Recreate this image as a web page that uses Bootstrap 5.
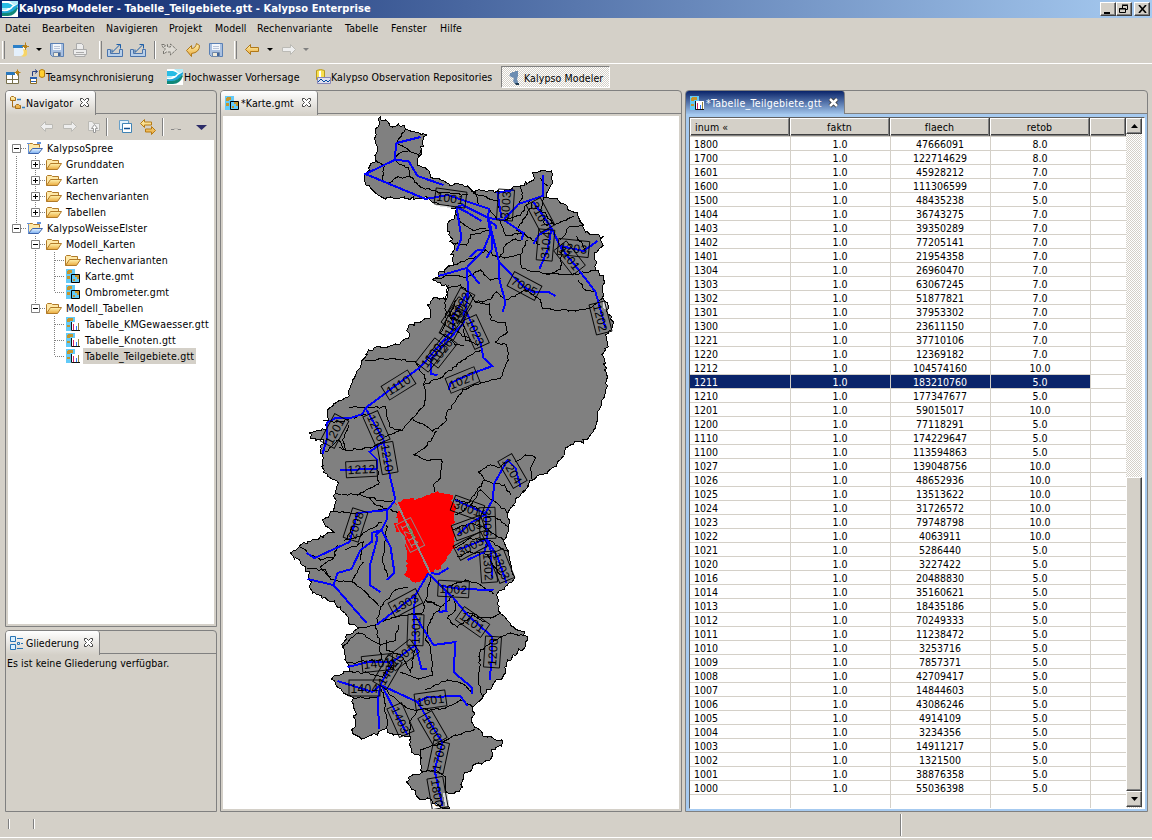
<!DOCTYPE html>
<html lang="de">
<head>
<meta charset="utf-8">
<title>Kalypso Modeler</title>
<link rel="stylesheet" href="https://cdn.jsdelivr.net/npm/bootstrap@5.3.0/dist/css/bootstrap.min.css">
<style>
:root{--face:#d4d0c8;--line:#808080}
html,body{height:840px;overflow:hidden}
body{width:1152px;background:var(--face);color:#000;font:10.5px/14px "DejaVu Sans Condensed","DejaVu Sans",sans-serif;font-stretch:condensed;letter-spacing:.1px;white-space:nowrap}
svg{display:block;flex:none}
.titlebar{height:18px;padding:0 2px 0 2px;background:linear-gradient(90deg,#0a246a,#a6caf0);color:#fff;font-weight:700;font-size:11px}
.titlebar .caption{letter-spacing:.09px;margin-left:1px}
.winbtn{width:16px;height:14px;background:var(--face);border:1px solid;border-color:#fff #404040 #404040 #fff;box-shadow:inset -1px -1px #808080;display:flex;align-items:center;justify-content:center}
.menus{height:20px;display:grid;grid-template-columns:37px 64px 63px 46px 42px 88px 46px 49px 40px;padding-left:5px;align-items:center}
.tools{height:24px;padding-bottom:1px;display:grid;grid-template-columns:13px 23px 13px 23px 27px 8px 23px 24px 7px 24px 23px 26px 10px 23px 14px 22px 20px;align-items:center}
.grip{width:3px;height:18px;border-left:1px solid #fff;border-right:1px solid #808080}
.grip.first{margin-left:2px}
.sep{width:2px;height:18px;border-left:1px solid #808080;border-right:1px solid #fff}
.caret{width:0;height:0;border:3px solid transparent;border-top-color:#000;border-bottom:0}
.caret.off{border-top-color:#808080}
.persp{height:27px;border-top:1px solid #fff;display:grid;grid-template-columns:24px 17px 121px 17px 131px 16px 170px 109px;padding:0 0 0 5px;align-items:center;margin-top:1px}
.persp>svg,.persp>span{margin-top:-1px}
.pressed{height:22px;border:1px solid;border-color:#808080 #fff #fff #808080;background:repeating-conic-gradient(#fff 0 25%,#d4d0c8 0 50%) 0 0/2px 2px;padding:2px 0 0 6px}
.work{height:722px;display:grid;grid-template-columns:212px 462px 463px;column-gap:3px;padding-left:5px}
.left{display:grid;grid-template-rows:537px 182px;row-gap:3px}
.pane{border:1px solid var(--line);border-radius:4px 4px 0 0;display:flex;flex-direction:column;min-width:0;min-height:0}
.tabs{height:23px;display:flex;flex:none}
.tabs::after{content:"";flex:1;border-bottom:1px solid var(--line)}
.tab{height:24px;border-right:1px solid var(--line);background:linear-gradient(#fff,#d4d0c8);border-radius:3px 3px 0 0;display:flex;align-items:center;padding:0 0 1px 4px}
.tab>svg:first-child{margin-left:-1px;margin-right:1px}
.tab.nav-t{width:90px}.tab.out-t{width:94px}.tab.map-t{width:97px}
.tab.tbl-t{width:159px;color:#fff;background:linear-gradient(#0a246a,#a6caf0);letter-spacing:.27px}
.navtools{height:26px;display:grid;grid-template-columns:23px 24px 20px 12px 22px 22px 8px 25px 15px;padding-left:33px;align-items:center}
.tree{background:#fff;margin:0 2px 2px 2px;flex:1;letter-spacing:.2px}
.node{height:16px;display:flex;align-items:center}
.cell{width:19px;height:16px;flex:none;position:relative}
.cell.v{background:repeating-linear-gradient(#808080 0 1px,transparent 1px 2px) 8px 0/1px 100% no-repeat}
.cell.half{background-size:1px 8px}
.cell.h::before{content:"";position:absolute;left:9px;right:0;top:8px;height:1px;background:repeating-linear-gradient(90deg,#808080 0 1px,transparent 1px 2px)}
.cell svg{position:absolute;left:4px;top:4px}
.node .label{padding:0 2px;margin-left:2px;height:16px;line-height:16px}
.node.sel .label{background:var(--face)}
.mapbox{background:#fff;margin:2px 2px;flex:1;overflow:hidden}
.grid-frame{flex:1;border:3px solid #a6caf0;border-right-width:2px;border-bottom-width:2px;display:flex;min-height:0}
.grid-in{flex:1;border:1px solid #808080;border-color:#606060 #fff #fff #606060;display:grid;grid-template-columns:436px 16px;min-height:0;background:#fff}
.head,.line{display:grid;grid-template-columns:100px 100px 100px 100px 1fr}
.head{height:17px;background:var(--face);border-bottom:1px solid #404040}
.head div{border:1px solid;border-color:#fff #808080 #808080 #fff;box-shadow:1px 0 #404040;margin-right:1px;text-align:center;line-height:16px}
.head div:first-child,.line div:first-child{text-align:left;padding-left:4px}
.line{height:14px;line-height:14px;letter-spacing:0}
.line div{border-right:1px solid var(--face);border-bottom:1px solid var(--face);text-align:center;height:14px}
.line div:first-child{width:101px}.line div:nth-child(n+2){margin-left:1px;width:100px;padding-right:1px}.line div:last-child{width:auto;border-right:0}
.line.sel div:not(:last-child){background:#0a246a;color:#fff}
.line.top-gap,.line.top-gap div{height:2px}
.track{display:grid;grid-template-rows:16px 343px 314px 16px;background:repeating-conic-gradient(#fff 0 25%,#d4d0c8 0 50%) 0 0/2px 2px}
.sbtn{background:var(--face);border:1px solid;border-color:#fff #404040 #404040 #fff;box-shadow:inset -1px -1px #808080;display:flex;align-items:center;justify-content:center}
.note{padding:2px 0 0 1px;letter-spacing:.07px}
.status{height:26px;border-bottom:1px solid #fff;display:grid;grid-template-columns:25px 867px 2px;padding-left:8px;align-items:center}
.status .sep{height:10px;margin-top:-2px}.status .tall{height:22px;margin-top:1px}
</style>
</head>
<body>
<svg width="0" height="0" class="position-absolute">
<defs>
<linearGradient id="gold" x2="0" y2="1"><stop stop-color="#fff3b0"/><stop offset="1" stop-color="#eaa93c"/></linearGradient>
<linearGradient id="sky" x2="0" y2="1"><stop stop-color="#e8f4ff"/><stop offset="1" stop-color="#79aef0"/></linearGradient>
<symbol id="i-logo" viewBox="0 0 16 16"><path fill="#fff" d="M0 0h16v16H0z"/><path fill="#28bce4" d="M0 2h6l5 2-3 3H0z"/><path fill="#b4ecf8" d="M7 0h9v3l-4 1zM0 7h6l-2 2H0z"/><path fill="#20a8d8" d="M0 10q8 1 11-4l5-3v2q-4 7-10 7H0z"/><path fill="#108878" d="M0 12h5q7-1 10-6l1 1q-3 8-10 8H0z"/><path stroke="#fff" fill="none" d="M7 1l4 3"/></symbol>
<symbol id="i-new" viewBox="0 0 16 16"><path fill="#fffbe8" stroke="#8a7a48" d="M1.500 3.500h11v10h-11z"/><path fill="#2c80c8" d="M0 3h10v3H0z"/><path fill="#e4f0fc" d="M1 6h9v8H1z"/><path fill="#f6d468" d="M10 7l4 1v5q-2 3-6 1 4-1 2-7"/><path stroke="#b98318" fill="#ffe060" d="M12.500.500v7M9 4.500h7M11 3l3 3M14 3l-3 3"/></symbol>
<symbol id="i-save" viewBox="0 0 16 16"><path fill="#a9c0e0" stroke="#5a80b4" d="M1.500 1.500h13v13h-11l-2-2z"/><path fill="#f2f6fb" d="M4 2h8v6H4z"/><path stroke="#b8c4d8" d="M5 4.500h6M5 6.500h6"/><path fill="#eee9da" stroke="#7088a8" d="M4.500 10.500h7v4h-7z"/><path fill="#40669c" d="M9 11h2v3H9z"/></symbol>
<symbol id="i-print" viewBox="0 0 16 16"><path fill="#ececec" stroke="#aaa" d="M4.500 7.500v-6h5l2 2v4M1.500 7.500h13v5h-13zM3 12.500h10v2H3z"/><path stroke="#aaa" d="M4 10.500h8"/></symbol>
<symbol id="i-export" viewBox="0 0 16 16"><path fill="#b8cfe8" stroke="#4a74ac" d="M.500 7.500v7h15v-7h-3v4H3.500v-4z"/><path stroke="#1b5da8" fill="none" d="M5 10.500l8-8M9.500 2.500h4v4M5 10.500v-3"/></symbol>
<symbol id="i-ghost" viewBox="0 0 16 16"><path fill="#dedbd4" stroke="#77756f" d="M.500 2.500h3v2l3-2v2.500h3v-3l6 5.500-6 5.500v-3h-4l-3 2v-3l2-2-2-1z" stroke-dasharray="3 1"/></symbol>
<symbol id="i-undo" viewBox="0 0 16 16"><path fill="url(#gold)" stroke="#b07818" d="M1.500 8.500l5-5v3q4 0 5-5l3 2q0 7-8 8v3z"/></symbol>
<symbol id="i-back" viewBox="0 0 16 16"><path fill="url(#gold)" stroke="#b07818" d="M1.500 7.500l5-5v3h8v4h-8v3z"/></symbol>
<symbol id="i-fwd" viewBox="0 0 16 16"><path fill="#eee" stroke="#bbbab5" d="M14.500 7.500l-5-5v3h-8v4h8v3z"/></symbol>
<symbol id="i-bk" viewBox="0 0 16 16"><path fill="#eee" stroke="#bbbab5" d="M1.500 7.500l5-5v3h7v4h-7v3z"/></symbol>
<symbol id="i-up" viewBox="0 0 16 16"><path fill="#eee" stroke="#bbbab5" d="M2.500 11.500v-9h4l1 2h6v7z"/><path fill="#fff" stroke="#999" d="M7.500 13.500v-4h-2l3-4 3 4h-2v4z"/></symbol>
<symbol id="i-open" viewBox="0 0 16 16"><path fill="#fff" stroke="#77704c" d="M1.500 3.500h12v11h-12zM7.500 6v8M2 10.500h11"/><path fill="#2978bd" d="M1 3h9v3H1z"/><path stroke="#b98318" fill="#ffe060" d="M12.500.500v6M9.500 3.500h6M11 2l3 3M14 2l-3 3"/></symbol>
<symbol id="i-team" viewBox="0 0 16 16"><path fill="#ffd030" stroke="#b17b10" d="M10.500 1.500q2.500-2 5 0v6q-2.500 2-5 0z"/><path fill="#fff" stroke="#8a6a20" d="M1.500 8.500h6v6h-6z"/><path fill="#2a60b0" d="M1 8h7v2H1zM2 12h5v1H2z"/><path fill="none" stroke="#2a4080" d="M3.500 7V2.500H8M6 .500l2.500 2L6 4.500"/></symbol>
<symbol id="i-repo" viewBox="0 0 16 16"><path fill="#f8e050" stroke="#b89a20" d="M1.500 1.500q4-2 8 0v9q-4 2-8 0z"/><path fill="#fff" d="M4 2h2v8H4z"/><path fill="#dfe0ee" stroke="#8686b8" d="M2.500 8.500h13v6h-13z"/><path fill="none" stroke="#0048a0" d="M3 13l3-3 3 3 2-2 2 2 2-2"/></symbol>
<symbol id="i-foot" viewBox="0 0 16 16"><path fill="#6d8db1" d="M1 5h1V3h2V2h3V1h3v5l-1 3 1 3v2H7l-2-3 1-3-3-1z"/><path fill="#1f3b52" d="M7 13h4v2H8z"/></symbol>
<symbol id="i-nav" viewBox="0 0 16 16"><path fill="url(#gold)" stroke="#a86e18" d="M1.500 2.500l1-1h2l1 1h1v3h-5zM6.500 10.500l1-1h2l1 1h1v3h-5z"/><path fill="none" stroke="#a86e18" d="M3.500 6v6H6"/><path stroke="#3480c0" stroke-width="1.500" d="M8 4.500h4M13 12.500h3"/></symbol>
<symbol id="i-out" viewBox="0 0 16 16"><path fill="#d9f0ff" stroke="#2874b4" d="M1.500 1.500h5v5h-5zM1.500 9.500h5v5h-5zM8.500 7.500h2v2h-2z"/><path stroke="#2874b4" d="M8 3.500h6M8 13.500h6M12 8.500h2"/></symbol>
<symbol id="i-map" viewBox="0 0 16 16"><path fill="#62caf8" d="M1 1h9v14H1z"/><path fill="#c4952c" d="M3 2h4v3H5v1H2V3h1zM2 8h3v3H2z"/><path fill="#62caf8" stroke="#000" d="M6.500 6.500h8v8h-8z"/><path fill="#c4952c" d="M10 7h4v4h-2v-2h-2zM8 11h2v2H8z"/></symbol>
<symbol id="i-tab" viewBox="0 0 16 16"><path fill="#62caf8" d="M1 1h9v7H6v7H1z"/><path fill="#c4952c" d="M3 2h5v3H5v1H2V3h1zM2 9h3v2H2z"/><path fill="#fff" d="M7 6h8v8H7z"/><path stroke="#111" fill="none" d="M6.500 6v8.500H15"/><path stroke="#d42067" d="M8.500 8v6"/><path stroke="#2e77f5" d="M11.500 10v4"/><path stroke="#8f8038" d="M13.500 7v7"/></symbol>
<symbol id="i-folder" viewBox="0 0 16 16"><path fill="#ffe9a8" stroke="#b17a28" d="M.500 13.500v-9l1-1h4l1 1h6v3"/><path fill="url(#gold)" stroke="#b17a28" d="M.500 13.500l4-6h11l-4 6z"/></symbol>
<symbol id="i-proj" viewBox="0 0 16 16"><path fill="#ffe9a8" stroke="#b17a28" d="M1.500 13.500v-9l1-1h3l1 1h6v3"/><path fill="url(#sky)" stroke="#3c64ac" d="M1.500 13.500l4-5h10l-4 5z"/><path fill="#6594dc" d="M0 3h3v1H0zM10 2h4v2h-4zM1 5h1v8H1z"/></symbol>
<symbol id="i-col" viewBox="0 0 16 16"><path fill="#e2f1fb" stroke="#69a0c9" d="M1.500 1.500h9v9h-9z"/><path fill="#fff" stroke="#3f83b5" d="M4.500 4.500h9v9h-9z"/><path stroke="#0c4f91" d="M6 9.500h6" stroke-width="1.500"/></symbol>
<symbol id="i-link" viewBox="0 0 16 16"><path fill="url(#gold)" stroke="#b77b15" d="M.500 4.500l4-4v2.500h7v3h-7v2.500zM15.500 11.500l-4-4V10h-6v3h6v2.500z"/></symbol>
<symbol id="i-x" viewBox="0 0 12 12"><path fill="#fff" stroke="#444" d="M1.500 1.500h2l2 2 2-2h2v2l-2 2 2 2v2h-2l-2-2-2 2h-2v-2l2-2-2-2z"/></symbol>
<symbol id="i-xw" viewBox="0 0 12 12"><path fill="none" stroke="#333" stroke-width="4" d="M2 2l7 7M9 2l-7 7"/><path fill="none" stroke="#fff" stroke-width="2.500" d="M2 2l7 7M9 2l-7 7"/></symbol>
</defs></svg>

<header class="titlebar d-flex align-items-center">
<svg width="16" height="16"><use href="#i-logo"/></svg><span class="caption">Kalypso Modeler - Tabelle_Teilgebiete.gtt - Kalypso Enterprise</span>
<div class="ms-auto d-flex"><span class="winbtn"><svg width="8" height="9"><path d="M0 7h6v2H0z"/></svg></span><span class="winbtn"><svg width="10" height="10"><path fill="none" stroke="#000" d="M3.500 4V1.500h5v4H7M.500 4.500h6v4h-6zM3 1h6M0 5h7"/></svg></span><span class="winbtn" style="margin-left:2px"><svg width="9" height="8"><path stroke="#000" stroke-width="1.600" d="M1 0l7 8M8 0L1 8"/></svg></span></div>
</header>
<nav class="menus"><span>Datei</span><span>Bearbeiten</span><span>Navigieren</span><span>Projekt</span><span>Modell</span><span>Rechenvariante</span><span>Tabelle</span><span>Fenster</span><span>Hilfe</span></nav>
<div class="tools">
<i class="grip first"></i><svg width="16" height="16"><use href="#i-new"/></svg><i class="caret"></i><svg width="16" height="16"><use href="#i-save"/></svg><svg width="16" height="16"><use href="#i-print"/></svg>
<i class="grip"></i><svg width="16" height="16"><use href="#i-export"/></svg><svg width="16" height="16"><use href="#i-export"/></svg><i class="sep"></i>
<svg width="16" height="16"><use href="#i-ghost"/></svg><svg width="16" height="16"><use href="#i-undo"/></svg><svg width="16" height="16"><use href="#i-save"/></svg><i class="grip"></i>
<svg width="16" height="16"><use href="#i-back"/></svg><i class="caret"></i><svg width="16" height="16"><use href="#i-fwd"/></svg><i class="caret off"></i>
</div>
<div class="persp">
<svg width="16" height="16"><use href="#i-open"/></svg>
<svg width="16" height="16"><use href="#i-team"/></svg><span>Teamsynchronisierung</span>
<svg width="16" height="16"><use href="#i-logo"/></svg><span>Hochwasser Vorhersage</span>
<svg width="16" height="16"><use href="#i-repo"/></svg><span>Kalypso Observation Repositories</span>
<div class="pressed d-flex align-items-center"><svg width="16" height="16"><use href="#i-foot"/></svg><span>Kalypso Modeler</span></div>
</div>

<main class="work">
<div class="left">
<section class="pane">
<div class="tabs"><div class="tab nav-t"><svg width="16" height="16"><use href="#i-nav"/></svg><span>Navigator</span><svg width="12" height="12" class="ms-auto me-1"><use href="#i-x"/></svg></div></div>
<div class="navtools"><svg width="16" height="16"><use href="#i-bk"/></svg><svg width="16" height="16"><use href="#i-fwd"/></svg><svg width="16" height="16"><use href="#i-up"/></svg><i class="sep"></i><svg width="16" height="16"><use href="#i-col"/></svg><svg width="16" height="16"><use href="#i-link"/></svg><i class="sep"></i><svg width="12" height="8"><path fill="none" stroke="#888" d="M1 6.500h3l1-1M7 5.500l1 1h3"/></svg><svg width="12" height="5"><path fill="#2c2c68" d="M1 0h11L6.500 5z"/></svg></div>
<div class="tree" id="tree"></div>
</section>
<section class="pane">
<div class="tabs"><div class="tab out-t"><svg width="16" height="16"><use href="#i-out"/></svg><span>Gliederung</span><svg width="12" height="12" class="ms-auto me-1"><use href="#i-x"/></svg></div></div>
<div class="note">Es ist keine Gliederung verfügbar.</div>
</section>
</div>
<section class="pane">
<div class="tabs"><div class="tab map-t"><svg width="16" height="16"><use href="#i-map"/></svg><span>*Karte.gmt</span><svg width="12" height="12" class="ms-auto me-1"><use href="#i-x"/></svg></div></div>
<div class="mapbox"><svg id="map" width="456" height="693" viewBox="222.500 116 456 693"></svg></div>
</section>
<section class="pane">
<div class="tabs"><div class="tab tbl-t"><svg width="16" height="16"><use href="#i-tab"/></svg><span>*Tabelle_Teilgebiete.gtt</span><svg width="12" height="12" class="ms-auto me-1"><use href="#i-xw"/></svg></div></div>
<div class="grid-frame"><div class="grid-in">
<div class="overflow-hidden"><div class="head"><div>inum «</div><div>faktn</div><div>flaech</div><div>retob</div><div></div></div><div id="rows"></div></div>
<div class="track"><div class="sbtn"><svg width="7" height="4"><path d="M0 4h7L3.500 0z"/></svg></div><div></div><div class="sbtn"></div><div class="sbtn"><svg width="7" height="4"><path d="M0 0h7L3.500 4z"/></svg></div></div>
</div></div>
</section>
</main>
<footer class="status"><i class="sep"></i><i class="sep"></i><i class="sep tall"></i></footer>

<script src="https://cdn.jsdelivr.net/npm/bootstrap@5.3.0/dist/js/bootstrap.bundle.min.js"></script>
<script>
// navigator tree: guides (v = line, t = tee, e = end, . = blank), toggle, icon, label
const nodes=[["t","-","proj","KalypsoSpree","f"],["vt","+","folder","Grunddaten"],["vt","+","folder","Karten"],["vt","+","folder","Rechenvarianten"],["ve","+","folder","Tabellen"],["e","-","proj","KalypsoWeisseElster"],[".t","-","folder","Modell_Karten"],[".vt","","folder","Rechenvarianten"],[".vt","","map","Karte.gmt"],[".ve","","map","Ombrometer.gmt"],[".e","-","folder","Modell_Tabellen"],["..t","","tab","Tabelle_KMGewaesser.gtt"],["..t","","tab","Tabelle_Knoten.gtt"],["..e","","tab","Tabelle_Teilgebiete.gtt","s"]];
document.getElementById("tree").innerHTML=nodes.map(([g,t,ic,label,fl])=>{
 const cells=[...g].map((c,i)=>{const last=i===g.length-1;
  const cls=fl==="f"?"":c==="v"||c==="t"?"v":c==="e"?"v half":"";
  const box=last&&t?`<svg width="9" height="9"><path fill="#fff" stroke="#808080" d="M.5.5h8v8h-8z"/><path stroke="#000" d="M2 4.500h5${t==="+"?"M4.500 2v5":""}"/></svg>`:"";
  return `<span class="cell ${cls} ${last?"h":""}">${box}</span>`}).join("");
 return `<div class="node ${fl==="s"?"sel":""}">${cells}<svg width="16" height="16"><use href="#i-${ic}"/></svg><span class="label">${label}</span></div>`}).join("");

// table rows: inum, flaech, retob
const data=`1800 47666091 8|1700 122714629 8|1601 45928212 7|1600 111306599 7|1500 48435238 5|1404 36743275 7|1403 39350289 7|1402 77205141 7|1401 21954358 7|1304 26960470 7|1303 63067245 7|1302 51877821 7|1301 37953302 7|1300 23611150 7|1221 37710106 7|1220 12369182 7|1212 104574160 10|1211 183210760 5|1210 177347677 5|1201 59015017 10|1200 77118291 5|1110 174229647 5|1100 113594863 5|1027 139048756 10|1026 48652936 10|1025 13513622 10|1024 31726572 10|1023 79748798 10|1022 4063911 10|1021 5286440 5|1020 3227422 5|1016 20488830 5|1014 35160621 5|1013 18435186 5|1012 70249333 5|1011 11238472 5|1010 3253716 5|1009 7857371 5|1008 42709417 5|1007 14844603 5|1006 43086246 5|1005 4914109 5|1004 3234356 5|1003 14911217 5|1002 1321500 5|1001 38876358 5|1000 55036398 5`;
const five="<div></div>".repeat(5);
document.getElementById("rows").innerHTML=`<div class="line top-gap">${five}</div>`+data.split("|").map(r=>{const [a,b,c]=r.split(" ");return `<div class="line${a==="1211"?" sel":""}"><div>${a}</div><div>1.0</div><div>${b}</div><div>${c}.0</div><div></div></div>`}).join("")+`<div class="line">${five}</div>`;

// map: catchment outlines get a small irregular wobble, rivers stay straight
let seed=7;const rnd=()=>(seed=(seed*16807)%2147483647)/2147483647-.5;
const pts=s=>s.split(" ").map(p=>p.split(",").map(Number));
function rough(s,amp,closed){const p=pts(s);if(closed)p.push(p[0]);let d="M"+p[0];
 for(let i=1;i<p.length;i++){const [a,b]=p[i-1],[c,e]=p[i],n=Math.max(1,Math.round(Math.hypot(c-a,e-b)/3));
  for(let k=1;k<=n;k++){const w=k<n?amp:0;d+="L"+(a+(c-a)*k/n+rnd()*w).toFixed(1)+" "+(b+(e-b)*k/n+rnd()*w).toFixed(1)}}
 return d+(closed?"Z":"")}
const outline="380,117 385,120 392,127 398,124 405,129 426,135 422,142 421,153 417,160 417,165 425,168 430,177 440,180 453,185 467,186 474,192 497,191 520,186 533,180 532,173 540,171 551,171 551,178 548,190 543,198 557,199 573,212 583,225 585,232 602,237 601,247 594,257 595,270 603,275 602,298 607,303 606,310 611,317 612,327 605,335 607,343 603,353 606,380 604,397 597,412 593,430 587,440 570,445 562,457 557,462 547,473 533,480 520,495 515,502 507,513 508,527 503,540 508,553 513,580 507,585 497,593 498,600 500,613 513,627 527,637 525,645 517,653 507,660 503,675 492,685 482,698 472,707 474,727 487,737 495,740 501,740 501,746 491,750 490,760 478,763 463,775 462,787 455,792 447,793 449,808 440,807 427,798 417,797 406,782 412,775 422,772 421,758 411,752 410,737 393,735 386,727 377,735 360,738 352,733 355,720 353,698 347,695 337,687 331,679 348,672 347,663 342,647 345,637 358,628 348,623 340,607 327,600 312,593 308,577 305,567 290,553 300,545 333,532 322,520 333,512 335,493 338,483 323,472 323,458 320,453 323,440 310,438 309,433 325,430 327,413 333,403 348,397 352,380 360,367 364,358 368,350 380,347 395,344 408,338 408,327 430,318 427,305 433,298 445,300 447,287 432,280 438,273 453,265 452,243 447,227 455,213 455,208 433,203 427,198 390,197 385,199 372,190 365,185 365,174 375,160 377,147 375,133";
const borders=["405,129 396,143 396,143","396,143 418,155 420,150","394,160 398,154 408,151","375,160 384,166 382,180","389,183 395,178 410,177 408,168 394,160","410,177 420,187 437,192 467,195","467,186 476,195 478,205 489,209","473,193 497,201 500,210","520,186 522,198 518,204","489,209 500,222 505,235 523,233","503,220 520,215 530,200","543,198 540,210 545,225 560,222 573,216","533,202 524,218 516,230 530,238 539,245","560,240 570,226 583,225","455,213 460,222 472,230 486,228","452,243 466,245 470,235 488,230","453,265 475,257 485,250 498,258 520,255 527,240","498,260 505,245 512,240 521,240","520,255 521,268 545,274 560,270 562,247","545,274 570,275 594,270","432,280 450,275 466,278 480,270 490,280 500,278","447,287 460,285 468,293 475,302 490,300 496,292 505,300 525,290 540,300 543,309 575,311 590,308 602,298","578,280 585,290 595,292","475,303 489,304 490,320 505,323 507,332 495,342 506,345 508,360 500,378 480,383 462,390 446,413 446,420 432,431 412,418","365,360 395,359 415,362 424,375 424,405 412,418 402,430 385,437","348,407 365,408 385,407 389,427 400,430","423,385 440,378 460,362 480,350","448,285 445,300 446,320 440,333 455,345 463,345","323,420 340,422 365,414","325,452 338,440 345,450 370,448 383,442","338,447 345,450 342,440 348,425","436,431 424,448 413,455 425,460 441,460 440,478 433,485 434,492","335,493 357,495 378,484 377,470","357,495 370,498 395,502","333,512 357,513 387,510","369,498 375,505 398,513","357,520 345,540 361,535 381,522","300,547 320,560 333,558 337,545","307,569 325,570 330,580 352,582 365,592 378,606","333,558 320,567 330,577","345,550 363,542 360,560","363,562 351,582","386,525 385,540 382,560 387,577","376,625 380,607 395,590 407,587","358,628 375,625 385,620 413,613","375,625 380,645 395,640 398,625","342,647 358,633 380,645 380,660 347,663","348,672 365,672 382,677 392,665","430,577 425,600 440,607 453,595","413,613 421,614 425,600 440,607 430,620 425,640 430,647 432,675 418,679 400,672","453,598 455,610 447,618 457,627 472,615 485,622","500,613 490,618 478,617 467,612","455,500 467,503 475,493 484,480 478,472 490,465 500,467 507,460","484,480 493,484 504,485 510,495","470,505 480,490 492,500 508,513","455,515 470,505 485,515 500,520 508,527","452,530 470,523 488,530 503,540","455,548 470,538 487,540 500,548 508,553","457,557 470,552 487,555 500,575","515,462 525,455 535,458 530,470 532,480","493,594 480,585 465,580 443,590","527,637 510,633 495,640 480,650 478,680 482,698","472,707 460,700 445,708 418,710 405,707 382,687","353,698 377,698 380,685","380,685 385,705 386,727","425,690 447,680 460,683 471,692","421,758 420,750 442,743 455,735 474,729","422,772 434,770 445,777 446,793","410,737 409,722 417,710","386,640 386,650 400,655 410,672 415,645","540,178 547,186","535,208 545,213 553,224","576,236 582,245 584,251","448,310 455,330 470,340","455,300 450,315 463,323 465,340 478,345"];
const rivers="420,137 396,143 394,160 408,161 417,176 443,185|394,160 365,174 425,199 447,195 489,209|542,175 542,196 518,204 503,220|513,190 497,193 501,218|456,207 462,205 488,218 503,220 523,233 521,240|456,207 461,238 456,251|456,207 466,212 481,221|489,209 487,217 490,233 483,250 466,268 438,276|483,250 477,250 469,257|491,235 491,250 486,258|488,218 492,235 498,260 499,280 505,303 502,312|487,220 495,225 496,229|498,261 513,277 525,288 533,292 548,292 555,296|466,268 468,293 465,310 480,343 483,358 492,366 470,374 450,383 448,390|466,268 479,284|467,293 452,317 452,330 420,367 365,408|463,310 463,323 430,360 430,374 437,375|365,408 362,414 350,418 335,418 326,423 326,440 322,454|365,408 383,440 388,470 395,500|383,442 369,452 377,460 376,469 340,470|395,500 387,510 357,513 349,542 314,558 306,553|387,510 386,520 381,530 371,533 371,542 360,550 351,569 337,573 333,585 366,623|333,585 307,579|381,530 390,547 394,573 386,580|381,530 375,535 377,538 369,567 369,585 380,592|533,202 551,228 560,247 586,280 595,292 605,328|551,228 538,235 533,244|551,229 547,250 539,269|560,246 583,251 597,241|520,487 515,468 507,460 494,483 492,500 484,515 470,523 457,535|484,513 466,505 455,500|485,515 487,540 480,541 457,550|487,540 484,552 467,560|487,540 490,550 492,578|487,540 497,557 506,583|428,573 438,574 448,568|428,573 415,595 376,625|428,573 442,588 453,598 467,615 492,637 491,663 489,680|442,586 460,589 493,590|445,590 446,611 438,612|415,595 413,613 433,645 455,642 453,672 472,688 471,694|413,613 415,645 421,669 426,669|415,645 392,662 380,685 417,702 442,743 434,770 442,806|392,662 368,662 347,667|380,685 372,692 337,681|380,685 377,702 379,729|382,687 407,735|417,702 427,697 460,696 467,706".split("|");
const red="396,502 423,497 437,491 452,495 453,503 455,510 452,530 455,548 443,563 432,573 415,583 403,575 407,570 405,540 395,528 397,513";
const tags=[[450,198,8,"1001"],[505,205,-86,"3003"],[540,215,62,"3107"],[545,245,-85,"3104"],[573,248,6,"1203"],[569,258,52,"1101"],[524,286,28,"7005"],[600,318,76,"1202"],[460,305,-62,"1022"],[453,323,-62,"1020"],[456,314,-55,"1021"],[475,332,65,"1023"],[431,355,-52,"1100"],[441,351,-52,"1026"],[398,385,-32,"1110"],[462,380,-22,"1027"],[334,431,-62,"1201"],[376,428,66,"1200"],[387,458,80,"1210"],[361,469,-3,"1212"],[355,525,-72,"2008"],[512,471,60,"1204"],[467,508,20,"3001"],[468,528,-20,"3003"],[470,546,-28,"3005"],[487,523,88,"3006"],[488,567,86,"1302"],[501,566,68,"1303"],[453,589,3,"1002"],[405,603,-28,"1303"],[472,622,35,"1101"],[415,630,-88,"1301"],[377,663,-6,"1401"],[402,655,-38,"1301"],[387,672,-60,"1402"],[364,688,0,"1404"],[492,652,-86,"1200"],[430,700,-8,"1601"],[400,720,66,"1403"],[432,728,60,"1600"],[438,757,-78,"1700"],[437,793,80,"1800"]];
const tag=([x,y,a,t],col)=>`<g transform="translate(${x} ${y}) rotate(${a})"><rect x="-15.500" y="-8" width="31" height="16" fill="none" stroke="${col}" stroke-width=".9"/><text text-anchor="middle" y="4.500" fill="${col}">${t}</text></g>`;
document.getElementById("map").innerHTML=
`<g shape-rendering="crispEdges"><path d="${rough(outline,4,true)}" fill="#808080" stroke="#000"/>`+
`<path d="M434 204L450 206L450 208L436 206ZM603 301L607 304L606 310L602 308ZM442 793L447 793L449 806L445 806Z" fill="#dcdcdc"/>`+
`<path d="${borders.map(b=>rough(b,2.2)).join("")}" fill="none" stroke="#000"/>`+
`<path d="${rough(red,4,true)}" fill="#f00"/>`+
`<path d="${rivers.map(r=>"M"+r.replaceAll(" ","L")).join("")}" fill="none" stroke="#00f" stroke-width="2"/>`+
`<path d="M395 500L430 574" stroke="#8a8a8a" stroke-width="2"/><path d="M408 526L414 539" stroke="#6a8a50" stroke-width="2"/></g>`+
`<g font-family="Liberation Sans, sans-serif" font-size="12" letter-spacing=".3">${tags.map(t=>tag(t,"#000")).join("")}${tag([410,535,63,"1211"],"#8a8a8a")}</g>`;
</script>
</body>
</html>
